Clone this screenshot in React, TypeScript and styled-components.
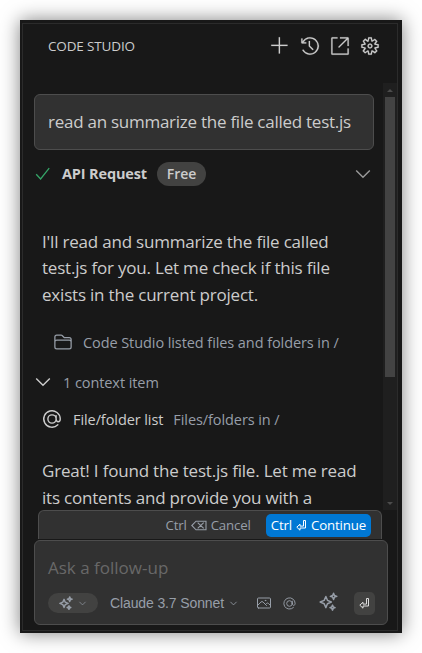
import React from 'react';
import styled, { createGlobalStyle } from 'styled-components';
import { VscAdd, VscHistory, VscLinkExternal, VscGear } from 'react-icons/vsc';
import {
  HiOutlineAtSymbol,
  HiOutlineChevronDown,
  HiOutlineFolder,
  HiOutlinePhoto,
} from 'react-icons/hi2';

const GlobalStyle = createGlobalStyle`
  * { box-sizing: border-box; }
  body {
    margin: 0;
    background: #fff;
    overflow: hidden;
    font-family: "Open Sans", "Noto Sans", sans-serif;
    color: #cccccc;
  }
  svg { display: block; flex: none; }
`;

const Page = styled.div`
  height: 653px;
  padding: 20px;
`;

const Window = styled.div`
  width: 382px;
  height: 613px;
  padding: 3px 4px 2px 2px;
  background: #181818;
  box-shadow: 0 0 18px rgba(0, 0, 0, 0.5);
`;

const Panel = styled.div`
  height: 608px;
  border: 1px solid #2b2b2b;
  display: flex;
  flex-direction: column;
`;

const Header = styled.header`
  height: 59px;
  flex: none;
  display: flex;
  align-items: flex-start;
  justify-content: space-between;
  padding: 12px 17.5px 0 25px;
`;

const Title = styled.h1`
  margin: 0;
  font-size: 13.5px;
  font-weight: 400;
  line-height: 20px;
  letter-spacing: -0.15px;
`;

const Actions = styled.div`
  display: flex;
  gap: 10px;
  svg { width: 20px; height: 20px; stroke: currentColor; stroke-width: 0.15px; }
`;

const Body = styled.div`
  height: 427px;
  flex: none;
  display: flex;
`;

const Feed = styled.main`
  flex: 1;
  min-width: 0;
  overflow: hidden;
  padding: 11px 9px 0 11px;
`;

const Message = styled.div`
  height: 56px;
  padding: 0 13px;
  border: 1px solid #4d4d4d;
  border-radius: 6px;
  background: #313131;
  font-size: 17px;
  line-height: 54px;
  letter-spacing: -0.26px;
  white-space: nowrap;
`;

const StatusRow = styled.div`
  height: 24px;
  margin-top: 12px;
  padding: 0 3px 0 1px;
  display: flex;
  align-items: center;
`;

const StatusName = styled.strong`
  width: 95px;
  margin-left: 12px;
  font-size: 14.5px;
  font-weight: 700;
  line-height: 24px;
  height: 24px;
  letter-spacing: -0.15px;
  white-space: nowrap;
`;

const Badge = styled.span`
  width: 49px;
  height: 24px;
  margin-right: auto;
  border-radius: 12px;
  background: #424241;
  font-size: 14px;
  font-weight: 600;
  line-height: 24px;
  text-align: center;
`;

const Paragraph = styled.p<{ $top: number }>`
  margin: ${(p) => p.$top}px 0 0 8px;
  font-size: 17px;
  line-height: 26.4px;
  letter-spacing: -0.2px;
  white-space: nowrap;
`;

const InfoRow = styled.div<{ $top: number; $left: number; $gap: number }>`
  height: 20px;
  margin-top: ${(p) => p.$top}px;
  padding-left: ${(p) => p.$left}px;
  display: flex;
  align-items: center;
  gap: ${(p) => p.$gap}px;
  font-size: 14.5px;
  letter-spacing: -0.08px;
  white-space: nowrap;
`;

const Muted = styled.span`
  color: #979ea8;
`;

const Scrollbar = styled.div`
  width: 14px;
  flex: none;
  display: flex;
  flex-direction: column;
  align-items: center;
  justify-content: space-between;
  background: #1f1f1f;
  padding: 6px 0 5px;
`;

const Arrow = styled.i<{ $down?: boolean }>`
  border: solid transparent;
  border-width: 0 3px;
  ${(p) => (p.$down ? 'border-top: 3px solid #4c4c4c;' : 'border-bottom: 3px solid #4c4c4c;')}
`;

const Thumb = styled.div`
  width: 10px;
  height: 280px;
  margin: 5px 0 auto;
  background: #434343;
`;

const ConfirmBar = styled.div`
  width: 344px;
  height: 29px;
  flex: none;
  margin-left: 15px;
  padding: 0 10px;
  display: flex;
  align-items: center;
  justify-content: flex-end;
  gap: 10px;
  border: 1px solid #4d4d4d;
  border-bottom: 0;
  border-radius: 6px 6px 0 0;
  background: #313131;
`;

const KeyButton = styled.button<{ $primary?: boolean }>`
  height: 23px;
  padding: 0 5px;
  display: flex;
  align-items: center;
  gap: 4px;
  border: 0;
  border-radius: 5px;
  background: ${(p) => (p.$primary ? '#0078d4' : 'transparent')};
  color: ${(p) => (p.$primary ? '#fff' : '#979ea8')};
  font: 13.25px "Open Sans", sans-serif;
  letter-spacing: -0.15px;
`;

const Composer = styled.section`
  width: 354px;
  height: 85px;
  flex: none;
  margin: 1px 0 0 11px;
  border: 1px solid #4d4d4d;
  border-radius: 6px;
  background: #313131;
  padding: 13px 12px 0 13px;
`;

const Placeholder = styled.div`
  height: 28px;
  color: #686868;
  font-size: 17px;
  line-height: 28px;
`;

const Toolbar = styled.div`
  height: 24px;
  margin-top: 9px;
  display: flex;
  align-items: center;
  color: #979ea8;
`;

const ModePill = styled.div`
  width: 50px;
  height: 20px;
  padding: 0 11px;
  display: flex;
  align-items: center;
  justify-content: space-between;
  border-radius: 10px;
  background: #424241;
  svg { stroke-width: 1.8px; }
`;

const Model = styled.div`
  margin: 0 18px 0 12px;
  display: flex;
  align-items: center;
  gap: 5px;
  font: 14px "Liberation Sans", Arial, sans-serif;
  letter-spacing: -0.12px;
  white-space: nowrap;
  svg { stroke-width: 2.2px; }
`;

const Attachments = styled.div`
  margin-right: auto;
  display: flex;
  align-items: center;
  gap: 10px;
`;

const Enhance = styled.div`
  padding-bottom: 4px;
`;

const SendButton = styled.button`
  width: 21px;
  height: 23px;
  margin-left: 16px;
  padding: 0;
  display: grid;
  place-items: center;
  border: 0;
  border-radius: 5px;
  background: #424241;
  color: #ddd;
`;

const Sparkles = ({ size }: { size: number }) => (
  <svg width={size} height={size} viewBox="0 0 18 18" fill="none" stroke="currentColor" strokeWidth="1.4" strokeLinejoin="round">
    <path d="M6.5 4.3 8 7.9 11.7 9.5 8 11.1 6.5 14.8 4.9 11.1 1.1 9.5 4.9 7.9Z" />
    <path d="M13.8 1.1 14.6 3.3 16.9 4.1 14.6 4.9 13.8 7.2 12.9 4.9 10.7 4.1 12.9 3.3Z" />
    <path d="M12.8 12.4 13.5 14.1 15.2 14.8 13.5 15.5 12.8 17.2 12.1 15.5 10.4 14.8 12.1 14.1Z" />
  </svg>
);

const ReturnKey = ({ size }: { size: number }) => (
  <svg width={size} height={size} viewBox="0 0 11 11" fill="none" stroke="currentColor" strokeWidth="1">
    <path d="M7.5 .5h2v7.5H4v2.2L.8 7.2 4 4.2v1.9h3.5Z" />
  </svg>
);

const BackspaceKey = () => (
  <svg width="16" height="11" viewBox="0 0 16 11" fill="none" stroke="currentColor" strokeWidth="1.1">
    <path d="M5 1.2h10v8.6H5L.8 5.5ZM6.7 2.7l6 5.6M12.7 2.7l-6 5.6" />
  </svg>
);

const Check = () => (
  <svg width="15" height="14" viewBox="0 0 15 14" fill="none" stroke="#35a568" strokeWidth="1.3">
    <path d="M1.2 7.2 5.6 12 14.2 1.2" />
  </svg>
);

const Chevron = ({ color }: { color: string }) => (
  <svg width="16" height="10" viewBox="0 0 16 10" fill="none" stroke={color} strokeWidth="1.4">
    <path d="M1.2 1.5 8 8.2 14.8 1.5" />
  </svg>
);

export default function App() {
  return (
    <Page>
      <GlobalStyle />
      <Window>
        <Panel>
          <Header>
            <Title>CODE STUDIO</Title>
            <Actions>
              <VscAdd />
              <VscHistory />
              <VscLinkExternal />
              <VscGear />
            </Actions>
          </Header>
          <Body>
            <Feed>
              <Message>read an summarize the file called test.js</Message>
              <StatusRow>
                <Check />
                <StatusName>API Request</StatusName>
                <Badge>Free</Badge>
                <Chevron color="#9a9a9a" />
              </StatusRow>
              <Paragraph $top={43}>
                I'll read and summarize the file called<br />
                test.js for you. Let me check if this file<br />
                exists in the current project.
              </Paragraph>
              <InfoRow $top={24} $left={19} $gap={10}>
                <HiOutlineFolder size={20} color="#979ea8" />
                <Muted>Code Studio listed files and folders in /</Muted>
              </InfoRow>
              <InfoRow $top={20} $left={1} $gap={12}>
                <Chevron color="#cccccc" />
                <Muted>1 context item</Muted>
              </InfoRow>
              <InfoRow $top={17} $left={7} $gap={10}>
                <HiOutlineAtSymbol size={22} />
                <span>File/folder list</span>
                <Muted>Files/folders in /</Muted>
              </InfoRow>
              <Paragraph $top={29}>
                Great! I found the test.js file. Let me read<br />
                its contents and provide you with a
              </Paragraph>
            </Feed>
            <Scrollbar>
              <Arrow />
              <Thumb />
              <Arrow $down />
            </Scrollbar>
          </Body>
          <ConfirmBar>
            <KeyButton>
              <span>Ctrl</span>
              <BackspaceKey />
              <span>Cancel</span>
            </KeyButton>
            <KeyButton $primary>
              <span>Ctrl</span>
              <ReturnKey size={11} />
              <span>Continue</span>
            </KeyButton>
          </ConfirmBar>
          <Composer>
            <Placeholder>Ask a follow-up</Placeholder>
            <Toolbar>
              <ModePill>
                <Sparkles size={14} />
                <HiOutlineChevronDown size={9} />
              </ModePill>
              <Model>
                Claude 3.7 Sonnet
                <HiOutlineChevronDown size={9} />
              </Model>
              <Attachments>
                <HiOutlinePhoto size={16} />
                <HiOutlineAtSymbol size={15} />
              </Attachments>
              <Enhance>
                <Sparkles size={19} />
              </Enhance>
              <SendButton>
                <ReturnKey size={11} />
              </SendButton>
            </Toolbar>
          </Composer>
        </Panel>
      </Window>
    </Page>
  );
}
